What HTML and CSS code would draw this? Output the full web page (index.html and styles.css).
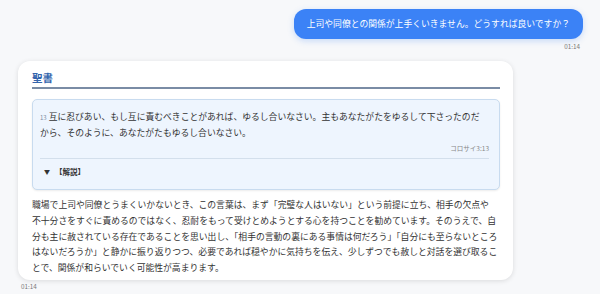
FILE: index.html
```html
<!DOCTYPE html>
<html lang="ja">
<head>
<meta charset="utf-8">
<link rel="stylesheet" href="styles.css">
</head>
<body>
<div class="user-row">
  <div class="bubble">上司や同僚との関係が上手くいきません。どうすれば良いですか？</div>
  <div class="time time-right">01:14</div>
</div>
<div class="card">
  <div class="card-title">聖書</div>
  <div class="verse-box">
    <p class="verse"><span class="vnum">13</span>互に忍びあい、もし互に責むべきことがあれば、ゆるし合いなさい。主もあなたがたをゆるして下さったのだ<br>から、そのように、あなたがたもゆるし合いなさい。</p>
    <div class="ref">コロサイ3:13</div>
    <div class="summary"><span class="tri">▼</span>【解説】</div>
  </div>
  <p class="body-text">職場で上司や同僚とうまくいかないとき、この言葉は、まず「完璧な人はいない」という前提に立ち、相手の欠点や<br>不十分さをすぐに責めるのではなく、忍耐をもって受けとめようとする心を持つことを勧めています。そのうえで、自<br>分も主に赦されている存在であることを思い出し、「相手の言動の裏にある事情は何だろう」「自分にも至らないところ<br>はないだろうか」と静かに振り返りつつ、必要であれば穏やかに気持ちを伝え、少しずつでも赦しと対話を選び取るこ<br>とで、関係が和らいでいく可能性が高まります。</p>
</div>
<div class="time time-left">01:14</div>
</body>
</html>
```

FILE: styles.css
```css
html, body {
  margin: 0;
  background: #f7f8fa;
}
body {
  padding: 9px 17px 0 18px;
  font-family: "Noto Sans CJK JP", "Noto Sans", sans-serif;
  color: #333;
}
.user-row {
  display: flex;
  flex-direction: column;
  align-items: flex-end;
}
.bubble {
  background: #3b82f6;
  color: #fff;
  font-size: 8.8px;
  line-height: 16px;
  padding: 7px 13px;
  border-radius: 12px;
  box-shadow: 0 2px 6px rgba(59, 130, 246, 0.25);
}
.time {
  font-size: 6.3px;
  line-height: 8px;
  color: #777;
}
.time-right {
  margin-top: 4px;
  padding-right: 3px;
}
.time-left {
  margin-top: 3px;
  padding-left: 3px;
}
.card {
  margin-top: 10px;
  width: 495px;
  box-sizing: border-box;
  background: #fff;
  border-radius: 12px;
  box-shadow: 0 1px 5px rgba(0, 0, 0, 0.12);
  padding: 10px 13px 4px 14px;
}
.card-title {
  font-size: 10.5px;
  line-height: 14px;
  font-weight: bold;
  color: #3465ad;
  padding-bottom: 2px;
  border-bottom: 2px solid #7a8ca5;
}
.verse-box {
  margin-top: 10px;
  background: #eef5fe;
  border: 1px solid #c8dbef;
  border-radius: 5px;
  padding: 9px 10px 11px 7px;
  box-shadow: 0 1px 2px rgba(0, 0, 0, 0.08);
}
.verse {
  margin: 0;
  font-size: 8.8px;
  line-height: 15.5px;
  color: #333;
}
.vnum {
  display: inline-block;
  font-size: 6px;
  line-height: 8px;
  color: #7a8ba0;
  margin-right: 2px;
}
.ref {
  margin-top: 3px;
  text-align: right;
  font-size: 6.5px;
  line-height: 10px;
  color: #888;
}
.summary {
  margin-top: 5px;
  border-top: 1px solid #d3dfec;
  padding: 7px 0 0 4px;
  font-size: 7.5px;
  line-height: 12px;
  font-weight: bold;
  color: #333;
}
.tri {
  display: inline-block;
  font-size: 6px;
  margin-right: 5px;
  vertical-align: 1px;
}
.body-text {
  margin: 7px 0 0;
  font-size: 8.8px;
  line-height: 15.8px;
  color: #333;
}
```
